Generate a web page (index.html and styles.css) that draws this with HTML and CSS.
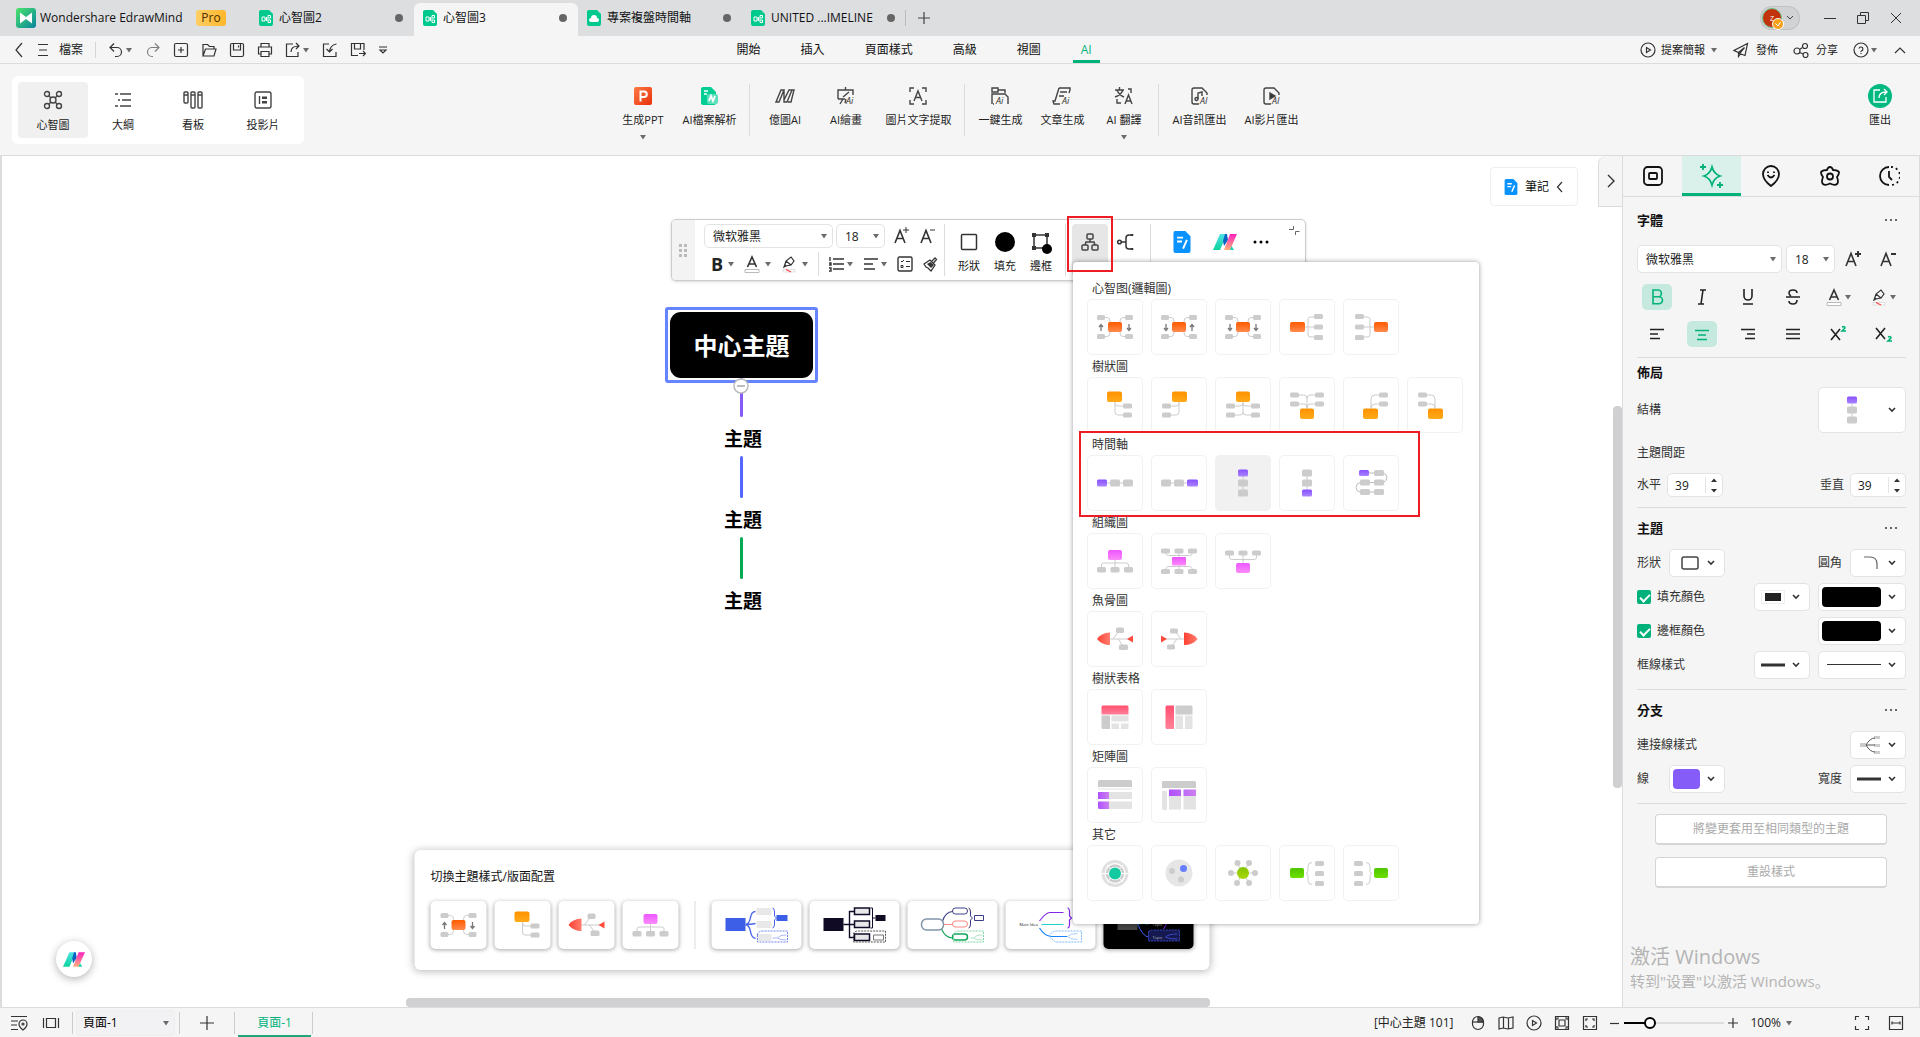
FILE: index.html
```html
<!DOCTYPE html>
<html lang="zh-Hant">
<head>
<meta charset="utf-8">
<title>Wondershare EdrawMind</title>
<link rel="stylesheet" href="styles.css">
</head>
<body>
<svg class="defs" aria-hidden="true">
  <defs>
    <linearGradient id="gLogo" x1="0" y1="0" x2="1" y2="1"><stop offset="0" stop-color="#4be36a"/><stop offset="1" stop-color="#07869e"/></linearGradient>
    <linearGradient id="gOrange" x1="0" y1="0" x2="0" y2="1"><stop offset="0" stop-color="#ff5a00"/><stop offset="1" stop-color="#ff8a4d"/></linearGradient>
    <linearGradient id="gAmber" x1="0" y1="0" x2="0" y2="1"><stop offset="0" stop-color="#ff9100"/><stop offset="1" stop-color="#ffab1a"/></linearGradient>
    <linearGradient id="gViolet" x1="0" y1="0" x2="0" y2="1"><stop offset="0" stop-color="#8850ff"/><stop offset="1" stop-color="#ab85ff"/></linearGradient>
    <linearGradient id="gPink" x1="0" y1="0" x2="0" y2="1"><stop offset="0" stop-color="#ec55ff"/><stop offset="1" stop-color="#fb8cf8"/></linearGradient>
    <linearGradient id="gRed" x1="0" y1="0" x2="1" y2="0"><stop offset="0" stop-color="#ff4133"/><stop offset="1" stop-color="#ff7d6e"/></linearGradient>
    <linearGradient id="gRose" x1="0" y1="0" x2="0" y2="1"><stop offset="0" stop-color="#ff5070"/><stop offset="1" stop-color="#ff8298"/></linearGradient>
    <linearGradient id="gPurple" x1="0" y1="0" x2="1" y2="0"><stop offset="0" stop-color="#b050ff"/><stop offset="1" stop-color="#cb80ef"/></linearGradient>
    <linearGradient id="gGreen" x1="0" y1="0" x2="0" y2="1"><stop offset="0" stop-color="#50c400"/><stop offset="1" stop-color="#6ee000"/></linearGradient>
    <linearGradient id="gLime" x1="0" y1="0" x2="0" y2="1"><stop offset="0" stop-color="#84c400"/><stop offset="1" stop-color="#a8d80c"/></linearGradient>
    <linearGradient id="gPpt" x1="0" y1="0" x2="1" y2="1"><stop offset="0" stop-color="#ff7a45"/><stop offset="1" stop-color="#e8300a"/></linearGradient>
    <linearGradient id="gTeal" x1="0" y1="0" x2="0" y2="1"><stop offset="0" stop-color="#4fe3e8"/><stop offset="1" stop-color="#0ad39b"/></linearGradient>
    <linearGradient id="gMag" x1="0" y1="0" x2="0" y2="1"><stop offset="0" stop-color="#ff1fc0"/><stop offset="1" stop-color="#ffb27a"/></linearGradient>

    <symbol id="tri" viewBox="0 0 8 6"><path d="M1 1h6L4 5.500z" fill="#6b6b6b"/></symbol>
    <symbol id="chev" viewBox="0 0 10 8"><path d="M2 2l3 3 3-3" fill="none" stroke="#333" stroke-width="1.600"/></symbol>
    <symbol id="dots" viewBox="0 0 14 4"><path d="M1 1h2v2H1zM6 1h2v2H6zM11 1h2v2h-2z" fill="#666"/></symbol>
    <symbol id="docMap" viewBox="0 0 16 18"><path d="M3 1h8l4 4v10a2 2 0 0 1-2 2H3a2 2 0 0 1-2-2V3a2 2 0 0 1 2-2z" fill="#00c98d"/><path d="M4 8h3v4H4zM10 6.500h2.500V9H10zM10 11h2.500v2.500H10zM7 10h3M8.500 8v4" fill="none" stroke="#fff"/></symbol>
    <symbol id="docCloud" viewBox="0 0 16 18"><path d="M3 1h8l4 4v10a2 2 0 0 1-2 2H3a2 2 0 0 1-2-2V3a2 2 0 0 1 2-2z" fill="#00c98d"/><path d="M5 13a2 2 0 0 1 0-4 3 3 0 0 1 6 0 2 2 0 0 1 0 4z" fill="#fff"/></symbol>
    <symbol id="note" viewBox="0 0 16 20"><path d="M2 0h9l5 5v13a2 2 0 0 1-2 2H2a2 2 0 0 1-2-2V2a2 2 0 0 1 2-2z" fill="#0a93ff"/><path d="M3.500 6H9M3.500 9.500H8M12.500 8l-3.500 8" stroke="#fff" stroke-width="1.800" fill="none"/></symbol>
    <symbol id="ailogo" viewBox="0 0 24 18"><path d="M7 1h7L7 17H0z" fill="url(#gTeal)"/><path d="M12 1h2l1 6-4 6-1-5z" fill="#0b62c4"/><path d="M18 12l3 5h-5z" fill="#12d6b4"/><path d="M17 1h7l-7 16h-6z" fill="url(#gMag)"/></symbol>
    <symbol id="fontA" viewBox="0 0 20 20"><path d="M3 17L8 4.500 13 17M5 12.500h6" fill="none" stroke="#333" stroke-width="1.600"/></symbol>
    <symbol id="colorA" viewBox="0 0 16 20"><path d="M3.500 13L8 3l4.500 10M5 10h6" fill="none" stroke="#333" stroke-width="1.600"/><path d="M1 15.500h14v3H1z" fill="#fff" stroke="#aaa" stroke-width=".8"/></symbol>
    <symbol id="marker" viewBox="0 0 16 20"><path d="M3 13l2-6 5-4 3 4-3 4-5 1zM5 7l5 4M3 13l2-2" fill="none" stroke="#333" stroke-width="1.200"/><path d="M2 15.500h12v2.500H2z" fill="#fff" stroke="#ccc" stroke-width=".6"/><path d="M5 15.500l5 2.500" stroke="#f44" stroke-width="1.200"/></symbol>

    <!-- layout thumbnails, drawn on a 56px square -->
    <g id="boxes4" fill="#ccc"><rect x="10" y="16" width="8" height="5" rx="1.500"/><rect x="38" y="16" width="8" height="5" rx="1.500"/><rect x="10" y="35" width="8" height="5" rx="1.500"/><rect x="38" y="35" width="8" height="5" rx="1.500"/><path d="M18 18.500h2q3 0 3 4v11q0 4-3 4h-2M38 18.500h-2q-3 0-3 4v11q0 4 3 4h2" fill="none" stroke="#ccc"/></g>
    <path id="up" d="M14 32v-6M12 28l2-2.500 2 2.500" fill="none" stroke="#777" stroke-width="1.300"/>
    <path id="down" d="M14 25v6M12 29l2 2.500 2-2.500" fill="none" stroke="#777" stroke-width="1.300"/>
    <g id="mindA"><use href="#boxes4"/><rect x="21" y="23" width="14" height="10" rx="2" fill="url(#gOrange)"/><use href="#up"/><use href="#down" x="28"/></g>
    <g id="mindB"><use href="#boxes4"/><rect x="21" y="23" width="14" height="10" rx="2" fill="url(#gOrange)"/><use href="#down" x="1"/><use href="#up" x="27"/></g>
    <g id="mindC"><use href="#boxes4"/><rect x="21" y="23" width="14" height="10" rx="2" fill="url(#gOrange)"/><use href="#down" x="1"/><use href="#down" x="27"/></g>
    <g id="mindR"><path d="M25 28h11M37 18h-5q-3 0-3 2v16q0 2 3 2h5" fill="none" stroke="#ccc"/><g fill="#ccc"><rect x="35" y="15" width="9" height="5" rx="1.500"/><rect x="35" y="25.500" width="9" height="5" rx="1.500"/><rect x="35" y="36" width="9" height="5" rx="1.500"/></g><rect x="11" y="23" width="15" height="10" rx="2" fill="url(#gOrange)"/></g>
    <g id="mindL"><path d="M20 28h12M20 18h4q3 0 3 2v16q0 2-3 2h-4" fill="none" stroke="#ccc"/><g fill="#ccc"><rect x="12" y="15" width="9" height="5" rx="1.500"/><rect x="12" y="25.500" width="9" height="5" rx="1.500"/><rect x="12" y="36" width="9" height="5" rx="1.500"/></g><rect x="31" y="23" width="14" height="10" rx="2" fill="url(#gOrange)"/></g>
    <g id="treeR"><path d="M28 24v11q0 3 3 3h6M28 26q0 3 3 3h6" fill="none" stroke="#ccc"/><g fill="#ccc"><rect x="36" y="26.500" width="9" height="5" rx="1.500"/><rect x="36" y="35.500" width="9" height="5" rx="1.500"/></g><rect x="20" y="14.500" width="15" height="10.500" rx="2" fill="url(#gAmber)"/></g>
    <g id="treeL"><path d="M28 24v11q0 3-3 3h-6M28 26q0 3-3 3h-6" fill="none" stroke="#ccc"/><g fill="#ccc"><rect x="11" y="26.500" width="9" height="5" rx="1.500"/><rect x="11" y="35.500" width="9" height="5" rx="1.500"/></g><rect x="21" y="14.500" width="15" height="10.500" rx="2" fill="url(#gAmber)"/></g>
    <g id="treeB"><path d="M28 24v11q0 3 3 3h6M28 26q0 3 3 3h6M28 35q0 3-3 3h-6M28 26q0 3-3 3h-6" fill="none" stroke="#ccc"/><g fill="#ccc"><rect x="11" y="26.500" width="9" height="5" rx="1.500"/><rect x="11" y="35.500" width="9" height="5" rx="1.500"/><rect x="36" y="26.500" width="9" height="5" rx="1.500"/><rect x="36" y="35.500" width="9" height="5" rx="1.500"/></g><rect x="21" y="14.500" width="14" height="10.500" rx="2" fill="url(#gAmber)"/></g>
    <g id="treeUp"><path d="M28 32V22q0-4-3-4h-5M28 31q0-4-3-4h-5M28 22q0-4 3-4h5M28 31q0-4 3-4h5" fill="none" stroke="#ccc"/><g fill="#ccc"><rect x="11" y="15.500" width="9" height="5" rx="1.500"/><rect x="11" y="24.500" width="9" height="5" rx="1.500"/><rect x="36" y="15.500" width="9" height="5" rx="1.500"/><rect x="36" y="24.500" width="9" height="5" rx="1.500"/></g><rect x="21" y="31.500" width="14" height="10.500" rx="2" fill="url(#gAmber)"/></g>
    <g id="treeUpR"><path d="M28 32V22q0-4 4-4h5M28 31q0-4 4-4h5" fill="none" stroke="#ccc"/><g fill="#ccc"><rect x="36" y="15.500" width="9" height="5" rx="1.500"/><rect x="36" y="24.500" width="9" height="5" rx="1.500"/></g><rect x="20" y="31.500" width="15" height="10.500" rx="2" fill="url(#gAmber)"/></g>
    <g id="treeUpL"><path d="M28 32V22q0-4-4-4h-5M28 31q0-4-4-4h-5" fill="none" stroke="#ccc"/><g fill="#ccc"><rect x="11" y="15.500" width="9" height="5" rx="1.500"/><rect x="11" y="24.500" width="9" height="5" rx="1.500"/></g><rect x="21" y="31.500" width="15" height="10.500" rx="2" fill="url(#gAmber)"/></g>
    <g id="timeR"><path d="M15 28h28" stroke="#ccc"/><rect x="10" y="24.500" width="10" height="7" rx="1.500" fill="url(#gViolet)"/><rect x="23" y="24.500" width="10" height="7" rx="1.500" fill="#ccc"/><rect x="36" y="24.500" width="10" height="7" rx="1.500" fill="#ccc"/></g>
    <g id="timeL"><path d="M15 28h28" stroke="#ccc"/><rect x="10" y="24.500" width="10" height="7" rx="1.500" fill="#ccc"/><rect x="23" y="24.500" width="10" height="7" rx="1.500" fill="#ccc"/><rect x="36" y="24.500" width="11" height="7" rx="1.500" fill="url(#gViolet)"/></g>
    <g id="timeD"><path d="M28 18v20" stroke="#ccc"/><rect x="23" y="14.500" width="10" height="7" rx="1.500" fill="url(#gViolet)"/><rect x="23" y="24.500" width="10" height="7" rx="1.500" fill="#ccc"/><rect x="23" y="34.500" width="10" height="7" rx="1.500" fill="#ccc"/></g>
    <g id="timeU"><path d="M28 18v20" stroke="#ccc"/><rect x="23" y="14.500" width="10" height="7" rx="1.500" fill="#ccc"/><rect x="23" y="24.500" width="10" height="7" rx="1.500" fill="#ccc"/><rect x="23" y="34.500" width="10" height="7" rx="1.500" fill="url(#gViolet)"/></g>
    <g id="timeS"><path d="M20 18h20q4 1 4 4.500T40 27.500H17q-4 1-4 5t4 4.500h20" fill="none" stroke="#bbb"/><g fill="#ccc"><rect x="31" y="15" width="10" height="6" rx="1.500"/><rect x="17" y="24.500" width="10" height="6" rx="1.500"/><rect x="31" y="24.500" width="10" height="6" rx="1.500"/><rect x="17" y="34" width="10" height="6" rx="1.500"/><rect x="31" y="34" width="10" height="6" rx="1.500"/></g><rect x="16" y="15" width="10" height="6" rx="1.500" fill="url(#gViolet)"/></g>
    <g id="orgD"><path d="M28 26v10M14.500 35v-3q0-2 2-2h23q2 0 2 2v3" fill="none" stroke="#ccc"/><g fill="#ccc"><rect x="10" y="34" width="9" height="5.500" rx="1.500"/><rect x="23.500" y="34" width="9" height="5.500" rx="1.500"/><rect x="37" y="34" width="9" height="5.500" rx="1.500"/></g><rect x="21" y="17" width="14" height="10" rx="2" fill="url(#gPink)"/></g>
    <g id="orgB"><path d="M28 18v20M14.500 19q0 3.500 3 3.500h21q3 0 3-3.500M14.500 38q0-4.500 3-4.500h21q3 0 3 4.500" fill="none" stroke="#ccc"/><g fill="#ccc"><rect x="10" y="15.500" width="9" height="5" rx="1.500"/><rect x="23.500" y="15.500" width="9" height="5" rx="1.500"/><rect x="37" y="15.500" width="9" height="5" rx="1.500"/><rect x="10" y="36" width="9" height="5" rx="1.500"/><rect x="23.500" y="36" width="9" height="5" rx="1.500"/><rect x="37" y="36" width="9" height="5" rx="1.500"/></g><rect x="21" y="24" width="14" height="8.500" rx="1" fill="url(#gPink)"/></g>
    <g id="orgU"><path d="M28 20v11M14.500 21v3q0 2.500 2 2.500h23q2 0 2-2.500v-3" fill="none" stroke="#ccc"/><g fill="#ccc"><rect x="10" y="17.500" width="9" height="5" rx="1.500"/><rect x="23.500" y="17.500" width="9" height="5" rx="1.500"/><rect x="37" y="17.500" width="9" height="5" rx="1.500"/></g><rect x="21" y="30" width="14" height="10" rx="2" fill="url(#gPink)"/></g>
    <g id="fishL"><path d="M22 28h20M26 28l6-8M31 28l5 7" stroke="#ccc" fill="none"/><path d="M23 21.500v12.500Q15 34 10 28q4-6 13-6.500z" fill="url(#gRed)"/><path d="M46 24.500v7L40 28z" fill="#ff4b3c"/><rect x="29" y="16.500" width="8" height="5.500" rx="1.500" fill="#ccc"/><rect x="32" y="33.500" width="9" height="5.500" rx="1.500" fill="#ccc"/></g>
    <g id="fishR"><path d="M14 28h20M24 20l6 8M20 36l6-8" stroke="#ccc" fill="none"/><path d="M33 21.500v12.500Q42 34 46.500 28q-4-6-13.500-6.500z" fill="url(#gRed)"/><path d="M10 24.500v7l6-3.500z" fill="#ff4b3c"/><rect x="19" y="17.500" width="8" height="5" rx="1.500" fill="#ccc"/><rect x="16" y="33.500" width="8" height="5" rx="1.500" fill="#ccc"/></g>
    <g id="tabA"><path d="M14.500 18q0-1.500 1.500-1.500h24q1.500 0 1.500 1.500v7.500h-27z" fill="url(#gRose)"/><path d="M14.500 26.500H23V40h-7q-1.500 0-1.500-1.500z" fill="#ccc"/><path d="M24.500 26.500h17v6h-17zM24.500 34.500h7.500V40h-7.500zM34 34.500h7.500V40H34z" fill="#e3e3e3"/></g>
    <g id="tabB"><path d="M23 16.500V40h-7q-1.500 0-1.500-1.500V18q0-1.500 1.500-1.500z" fill="url(#gRose)"/><path d="M24.500 16.500H40q1.500 0 1.500 1.500v7.500h-17z" fill="#ccc"/><path d="M24.500 26.500H32V40h-7.500zM34 26.500h7.500V40H34z" fill="#e3e3e3"/></g>
    <g id="matA"><path d="M11 21.500h34v1H11zM22 25h23v7H22zM22 34.500h23v6q0 1.500-1.500 1.500H22z" fill="#e3e3e3"/><path d="M11 14.500q0-1.500 1.500-1.500h31q1.500 0 1.500 1.500V20H11z" fill="#ccc"/><path d="M11 25h11v7H11zM11 34.500h11V42h-9.500q-1.500 0-1.500-1.500z" fill="url(#gPurple)"/></g>
    <g id="matB"><path d="M11 24h5v19h-3.500Q11 43 11 41zM18 29h12v13.500H18zM32.500 29H45v13.500H32.500z" fill="#e3e3e3"/><path d="M11 15.500q0-1.500 1.500-1.500h31q1.500 0 1.500 1.500V21H11z" fill="#ccc"/><path d="M18 22.500h12V29H18zM32.500 22.500H45V29H32.500z" fill="url(#gPurple)"/></g>
    <g id="othA"><circle cx="28" cy="28.500" r="12" fill="none" stroke="#e0e0e0" stroke-width="3"/><circle cx="28" cy="28.500" r="8" fill="none" stroke="#ccc" stroke-width="2.500"/><path d="M14 28.500h28M20 20l16 17M36 20L20 37" stroke="#fff"/><circle cx="28" cy="28.500" r="6" fill="#12c9a2"/></g>
    <g id="othB"><circle cx="28" cy="28" r="13.500" fill="#e6e6e6"/><circle cx="21" cy="26" r="3" fill="#ccc"/><circle cx="30" cy="34.500" r="3" fill="#ccc"/><circle cx="32.500" cy="23.500" r="3.500" fill="#667eff"/></g>
    <g id="othC"><path d="M17 28h22M22 18l12 20M34 18L22 38" stroke="#ccc"/><g fill="#ccc"><circle cx="16" cy="28" r="3"/><circle cx="40" cy="28" r="3"/><circle cx="22.500" cy="18" r="3"/><circle cx="34" cy="18" r="3"/><circle cx="22" cy="38" r="3"/><circle cx="34" cy="38" r="3"/></g><circle cx="28" cy="28" r="6" fill="url(#gLime)"/></g>
    <g id="othD"><rect x="11" y="23" width="14" height="10" rx="2" fill="url(#gGreen)"/><path d="M33 17.500q-4 0-4 4v4q0 3-2 3 2 0 2 3v4q0 4 4 4" fill="none" stroke="#ccc"/><g fill="#ccc"><rect x="36" y="16" width="9" height="5" rx="1.500"/><rect x="36" y="26" width="9" height="5" rx="1.500"/><rect x="36" y="36" width="9" height="5" rx="1.500"/></g></g>
    <g id="othE"><rect x="31" y="23" width="14" height="10" rx="2" fill="url(#gGreen)"/><path d="M23 17.500q4 0 4 4v4q0 3 2 3-2 0-2 3v4q0 4-4 4" fill="none" stroke="#ccc"/><g fill="#ccc"><rect x="11" y="16" width="9" height="5" rx="1.500"/><rect x="11" y="26" width="9" height="5" rx="1.500"/><rect x="11" y="36" width="9" height="5" rx="1.500"/></g></g>
  </defs>
</svg>

<header class="titlebar">
  <div class="brand">
    <svg width="20" height="20" viewBox="0 0 20 20"><rect width="20" height="20" rx="3" fill="url(#gLogo)"/><path d="M4 15.500v-11l6 4.500 6-4.500v11L10 11z" fill="#fff"/></svg>
    <span class="brand-name">Wondershare EdrawMind</span>
    <span class="pro">Pro</span>
  </div>
  <div class="doc-tabs">
    <button class="doc-tab"><svg width="16" height="18"><use href="#docMap"/></svg><span>心智圖2</span><i></i></button>
    <button class="doc-tab current"><svg width="16" height="18"><use href="#docMap"/></svg><span>心智圖3</span><i></i></button>
    <button class="doc-tab"><svg width="16" height="18"><use href="#docCloud"/></svg><span>專案複盤時間軸</span><i></i></button>
    <button class="doc-tab last"><svg width="16" height="18"><use href="#docMap"/></svg><span>UNITED ...IMELINE</span><i></i></button>
    <button class="new-tab" aria-label="新增"><svg width="16" height="16" viewBox="0 0 16 16"><path d="M8 2v12M2 8h12" stroke="#444" stroke-width="1.200"/></svg></button>
  </div>
  <div class="window-tools">
    <button class="account" aria-label="帳戶"><svg width="40" height="24" viewBox="0 0 40 24"><circle cx="12" cy="12" r="9.500" fill="#c2330d" stroke="#6cc58f"/><text x="12" y="15" class="avatar-letter">Z</text><circle cx="18" cy="18" r="5.500" fill="#f6a01b" stroke="#fff"/><path d="M15.500 17.500l2.500 2.500 2.500-4" stroke="#fff" fill="none"/><path d="M27 10l3 3 3-3" stroke="#444" fill="none"/></svg></button>
    <button aria-label="最小化"><svg width="12" height="12" viewBox="0 0 12 12"><path d="M0 6.500h12" stroke="#333"/></svg></button>
    <button aria-label="還原"><svg width="14" height="14" viewBox="0 0 14 14"><path d="M1.500 4.500h8v8h-8zM4.500 4.500v-3h8v8h-3" fill="none" stroke="#333"/></svg></button>
    <button aria-label="關閉"><svg width="12" height="12" viewBox="0 0 12 12"><path d="M1 1l10 10M11 1L1 11" stroke="#333"/></svg></button>
  </div>
</header>

<div class="menubar">
  <div class="quick">
    <button aria-label="返回"><svg width="16" height="16" viewBox="0 0 16 16"><path d="M11 1L5 8l6 7"/></svg></button>
    <button class="with-text"><svg width="16" height="16" viewBox="0 0 16 16"><path d="M3 2.500h10M4 8h8M3 13.500h10"/></svg><span>檔案</span></button>
    <span class="bar-rule"></span>
    <button class="with-tri" aria-label="復原"><svg width="16" height="16" viewBox="0 0 16 16"><path d="M6 1.500L2 5.500l4 4M2.500 5.500H9a4.500 4.500 0 0 1 0 9H7"/></svg><svg width="8" height="6"><use href="#tri"/></svg></button>
    <button class="faded" aria-label="重做"><svg width="16" height="16" viewBox="0 0 16 16"><path d="M10 1.500l4 4-4 4M13.500 5.500H7a4.500 4.500 0 0 0 0 9h1"/></svg></button>
    <button aria-label="新增"><svg width="16" height="16" viewBox="0 0 16 16"><rect x="1.500" y="1.500" width="13" height="13" rx="1.500"/><path d="M8 5v6M5 8h6"/></svg></button>
    <button aria-label="開啟"><svg width="16" height="16" viewBox="0 0 16 16"><path d="M2 14V2.500h4.500l2 2H13V7M2 14l2.500-7H15l-2 7z"/></svg></button>
    <button aria-label="儲存"><svg width="16" height="16" viewBox="0 0 16 16"><rect x="1.500" y="1.500" width="13" height="13" rx="1.500"/><path d="M4.500 2v6h7V2M9.500 3.500v2"/></svg></button>
    <button aria-label="列印"><svg width="16" height="16" viewBox="0 0 16 16"><path d="M4 5V1.500h8V5M4 12H1.500V5h13v7H12M4 9.500h8v5H4z"/></svg></button>
    <button class="with-tri" aria-label="匯出"><svg width="16" height="16" viewBox="0 0 16 16"><path d="M8 2H1.500v12.500H13V10M6 10q0-6 8-6M11 1l3 3-3 3"/></svg><svg width="8" height="6"><use href="#tri"/></svg></button>
    <button aria-label="匯入"><svg width="16" height="16" viewBox="0 0 16 16"><path d="M7 2H1.500v12.500H14V10M14.500 2Q8 3 7.500 10M4.500 7l3 3 3-3"/></svg></button>
    <button aria-label="另存"><svg width="16" height="16" viewBox="0 0 16 16"><path d="M14 8V1.500H1.500v12H8M4.500 2v5h6V2M9 11.500h6M13 9l2.500 2.500L13 14"/></svg></button>
    <button aria-label="更多"><svg width="10" height="10" viewBox="0 0 10 10"><path d="M1 2h8M2 5l3 3 3-3z"/></svg></button>
  </div>
  <nav class="menu">
    <a href="#">開始</a><a href="#">插入</a><a href="#">頁面樣式</a><a href="#">高級</a><a href="#">視圖</a><a href="#" class="current">AI</a>
  </nav>
  <div class="share-tools">
    <button><svg width="16" height="16" viewBox="0 0 16 16"><circle cx="8" cy="8" r="7"/><path d="M6.500 5.500v5L10.500 8z"/></svg><span>提案簡報</span><svg width="8" height="6"><use href="#tri"/></svg></button>
    <button><svg width="16" height="16" viewBox="0 0 16 16"><path d="M14.500 1.500L1 8.500l4.500 2 6-5-5 6 5.500 2zM5.500 10.500v4l2-2.500"/></svg><span>發佈</span></button>
    <button><svg width="16" height="16" viewBox="0 0 16 16"><circle cx="4" cy="9" r="3"/><circle cx="12" cy="4" r="2.500"/><circle cx="12.500" cy="13" r="2.500"/><path d="M6.500 7.500l3-2M6.500 10.500l4 1.500"/></svg><span>分享</span></button>
    <button class="with-tri" aria-label="說明"><svg width="16" height="16" viewBox="0 0 16 16"><circle cx="8" cy="8" r="7"/><path d="M6 6.500a2 2 0 1 1 2 2.500M8 9v1M8 11v1"/></svg><svg width="8" height="6"><use href="#tri"/></svg></button>
    <button aria-label="收合"><svg width="14" height="10" viewBox="0 0 14 10"><path d="M2 8l5-5 5 5"/></svg></button>
  </div>
</div>

<div class="ribbon">
  <div class="ribbon-side">
    <div class="views">
      <button class="current"><svg width="20" height="20" viewBox="0 0 20 20"><circle cx="10" cy="10" r="3"/><circle cx="4" cy="4" r="2.500"/><circle cx="16" cy="4" r="2.500"/><circle cx="4" cy="16" r="2.500"/><circle cx="16" cy="16" r="2.500"/><path d="M6 6l2 2M14 6l-2 2M6 14l2-2M14 14l-2-2"/></svg>心智圖</button>
      <button><svg width="20" height="20" viewBox="0 0 20 20"><path d="M2 4h3M7 4h11M5 10h2M9 10h9M2 16h3M7 16h11"/></svg>大綱</button>
      <button><svg width="20" height="20" viewBox="0 0 20 20"><rect x="1" y="2" width="4" height="11" rx="1"/><rect x="8" y="2" width="4" height="16" rx="1"/><rect x="15" y="2" width="4" height="16" rx="1"/><path d="M1 5h4M8 5h4M15 5h4"/></svg>看板</button>
      <button><svg width="20" height="20" viewBox="0 0 20 20"><rect x="2" y="2" width="16" height="16" rx="2"/><path d="M6.500 6v8"/><path d="M9 6.500h5v2.500H9zM9 11h5v2.500H9z" fill="#444" stroke="none"/></svg>投影片</button>
    </div>
  </div>
  <div class="ai-tools">
    <button><svg width="20" height="20" viewBox="0 0 20 20"><rect x="1" y="1" width="18" height="18" rx="2" fill="url(#gPpt)" stroke="none"/><path d="M7.500 15.500v-10H11a2.800 2.800 0 0 1 0 5.600H8" stroke="#fff" stroke-width="2"/></svg>生成PPT<svg class="more" width="8" height="6"><use href="#tri"/></svg></button>
    <button><svg width="20" height="20" viewBox="0 0 20 20"><path d="M4 1h8l5 5v11a2 2 0 0 1-2 2H4a2 2 0 0 1-2-2V3a2 2 0 0 1 2-2z" fill="#02cd93" stroke="none"/><path d="M5 5h4M5 8h3" stroke="#fff"/><rect x="8" y="8" width="11" height="10" rx="2" fill="#5ee0bd" stroke="none"/><path d="M10 15l2-5 2 5 2-5" stroke="#fff" stroke-width="1.800"/></svg>AI檔案解析</button>
    <span class="tool-rule"></span>
    <button><svg width="20" height="20" viewBox="0 0 20 20"><path d="M1 16L6 4h3L4 16zM9 4l0 12h3L17 4h-3L9 14M17 4h2l-3 12h-3"/></svg>億圖AI</button>
    <button><svg width="20" height="20" viewBox="0 0 20 20"><path d="M2 13V4h15v5M2 13h7M9.500 1v3M13 6l-6 5M4 18l3-5M10 13l-1 4"/><text x="10" y="18" class="ai-mark">Ai</text></svg>AI繪畫</button>
    <button><svg width="20" height="20" viewBox="0 0 20 20"><path d="M2 6V2h4M14 2h4v4M18 14v4h-4M6 18H2v-4M6 15l4-10 4 10M7.500 11.500h5"/></svg>圖片文字提取</button>
    <span class="tool-rule"></span>
    <button><svg width="20" height="20" viewBox="0 0 20 20"><path d="M2 2h6v4H2zM8 4h7v3M2 18V8h13l3 3v7M3 18h1"/><text x="6" y="18" class="ai-mark">Ai</text></svg>一鍵生成</button>
    <button><svg width="20" height="20" viewBox="0 0 20 20"><path d="M7 2h11v2l-1 3M7 2L3 15H1l1 3h6M8 6h7M7 10h5"/><text x="10" y="18" class="ai-mark">Ai</text></svg>文章生成</button>
    <button><svg width="20" height="20" viewBox="0 0 20 20"><path d="M1 4h9M5.500 1v3M9 4Q7 9 1 11M3 4q2 5 7 7M14 3h3v4M3 13v4h4M11 18l3.500-9L18 18M12.500 15h4"/></svg>AI 翻譯<svg class="more" width="8" height="6"><use href="#tri"/></svg></button>
    <span class="tool-rule"></span>
    <button><svg width="20" height="20" viewBox="0 0 20 20"><path d="M9 18H4a2 2 0 0 1-2-2V4a2 2 0 0 1 2-2h8l5 5v2M8 13V7l4-1v4"/><circle cx="6.500" cy="13" r="1.500"/><text x="10" y="18" class="ai-mark">AI</text></svg>AI音訊匯出</button>
    <button><svg width="20" height="20" viewBox="0 0 20 20"><path d="M9 18H4a2 2 0 0 1-2-2V4a2 2 0 0 1 2-2h8l5 5v2"/><path d="M8 7v6l5-3z" fill="#333"/><text x="10" y="18" class="ai-mark">AI</text></svg>AI影片匯出</button>
  </div>
  <div class="ribbon-side end">
    <button class="export"><svg width="24" height="24" viewBox="0 0 24 24"><circle cx="12" cy="12" r="12" fill="#00b981"/><path d="M12 6H6v12h12v-5M11 14q0-6 7-6M16 5l3 3-3 3" fill="none" stroke="#fff" stroke-width="1.300"/></svg>匯出</button>
  </div>
</div>

<main class="work">
  <section class="canvas" aria-label="畫布">
    <div class="topic root"><span>中心主題</span></div>
    <span class="link l1"></span><span class="link l2"></span><span class="link l3"></span>
    <button class="fold" aria-label="收合"><svg width="16" height="16" viewBox="0 0 16 16"><circle cx="8" cy="8" r="7" fill="#fff" stroke="#bbb" stroke-width="1.500"/><path d="M4 8h8" stroke="#aaa" stroke-width="1.500"/></svg></button>
    <div class="topic t1">主題</div><div class="topic t2">主題</div><div class="topic t3">主題</div>

    <button class="notes"><svg width="14" height="16"><use href="#note"/></svg>筆記<svg width="8" height="12" viewBox="0 0 8 12"><path d="M6 1L1.500 6 6 11" fill="none" stroke="#333" stroke-width="1.200"/></svg></button>
    <button class="collapse" aria-label="收合面板"><svg width="10" height="16" viewBox="0 0 10 16"><path d="M2 2l6 6-6 6" fill="none" stroke="#333" stroke-width="1.400"/></svg></button>
    <span class="scroll-v"></span><span class="scroll-h"></span>
    <button class="assistant" aria-label="AI 助手"><svg width="22" height="17"><use href="#ailogo"/></svg></button>

    <div class="switcher">
      <h2>切換主題樣式/版面配置</h2>
      <div class="switch-row">
        <button class="pick" aria-label="心智圖"><svg viewBox="0 4 56 48"><use href="#mindA"/></svg></button>
        <button class="pick" aria-label="樹狀圖"><svg viewBox="0 4 56 48"><use href="#treeR"/></svg></button>
        <button class="pick" aria-label="魚骨圖"><svg viewBox="0 4 56 48"><use href="#fishL"/></svg></button>
        <button class="pick" aria-label="組織圖"><svg viewBox="0 4 56 48"><use href="#orgD"/></svg></button>
        <span class="pick-rule"></span>
        <button class="pick style" aria-label="樣式 1"><svg viewBox="0 0 90 48" fill="none"><path d="M34 23.500q4-1 5-7t5-6M34 23.500q6 0 10-1M34 23.500q4 1 5 7t5 7" stroke="#4763e8" stroke-width="1.400"/><path d="M45 7h15v7H45zM45 20h15v7H45zM45 33h15v7H45z" fill="#e8e8e8"/><path d="M14 17h20v13H14z" fill="#3d5fe8"/><path d="M65 14h11v6H65z" fill="#3d5fe8"/><path d="M61 7q2 0 2 4v4l2 2-2 2v4q0 4-2 4" stroke="#4763e8"/><path d="M46 34q0-4 6-4h24v11H46z" stroke="#6f86ee" stroke-dasharray="2 1"/><path d="M61 37h5q2-3 9-3M66 37q2 2 9 2" stroke="#a9b6f4"/></svg></button>
        <button class="pick style" aria-label="樣式 2"><svg viewBox="0 0 90 48" fill="none"><path d="M34 23.500h11M45 10.500h-5v26h5" stroke="#120b28" stroke-width="1.400"/><path d="M45 7h15v6.500H45zM45 20h15v6.500H45zM45 33h15v6.500H45z" fill="#e8e8e8" stroke="#120b28" stroke-width="1.500"/><path d="M14 17h20v13H14z" fill="#100a25"/><path d="M66 14h10v6H66z" fill="#100a25"/><path d="M61 7h2v20h-2M63 17h3" stroke="#120b28"/><path d="M44 33q0-3 6-3h26v11H44z" stroke="#555" stroke-dasharray="2 1"/><path d="M64 34h10v5H64z" stroke="#777"/></svg></button>
        <button class="pick style" aria-label="樣式 3"><svg viewBox="0 0 90 48" fill="none"><path d="M35 20q3-9 10-9.500" stroke="#3b3e85" stroke-width="1.200"/><path d="M36 23.500h9" stroke="#ff8585" stroke-width="1.200"/><path d="M34 28q4 9 11 9" stroke="#10a75a" stroke-width="1.200"/><rect x="14" y="18" width="22" height="11" rx="5" stroke="#8095a8" stroke-width="1.500"/><rect x="45" y="7" width="15" height="6" rx="3" stroke="#3b3e85"/><rect x="45" y="20" width="15" height="6" rx="3" stroke="#ff8585"/><rect x="45" y="33" width="15" height="6" rx="3" stroke="#10a75a" stroke-width="1.500"/><path d="M61 7q2 0 2 4v4l2 2-2 2v4q0 4-2 4M67 14.500h9v5h-9z" stroke="#3b3e85"/><path d="M46 34q0-4 6-4h24v11H46z" stroke="#7ed3a4" stroke-dasharray="2 1"/><path d="M63 37h3q2-3 9-3M66 37q2 2 9 2" stroke="#aee3c5"/></svg></button>
        <button class="pick style" aria-label="樣式 4"><svg viewBox="0 0 90 48" fill="none"><text x="14" y="25" class="mini-dark">Main Idea</text><path d="M34 20q6-8 10-8.500h14M62 7q2 0 2 4v4l2 2-2 2v4q0 4-2 4" stroke="#8128e8" stroke-width="1.200"/><path d="M36 23.500h22" stroke="#22d2c6" stroke-width="1.200"/><path d="M34 27q5 8 12 8.500h16" stroke="#1683ff" stroke-width="1.200"/><path d="M44 36q1-6 8-6h24v11H50z" stroke="#7bb9ff" stroke-dasharray="2 1"/><path d="M62 35.500q3-3 10-3M62 35.500q3 3 10 3" stroke="#a9d0ff"/></svg></button>
        <button class="pick style dark" aria-label="樣式 5"><svg viewBox="0 0 90 48" fill="none"><path d="M14 16h20v13H14z" fill="#444"/><path d="M34 23q6-1 11 0" stroke="#18b35b"/><path d="M34 23q6 13 11 13" stroke="#4060ff"/><path d="M60 28q3-3 3-8" stroke="#8128e8"/><path d="M45 31q0-2 6-2h25v11H45z" fill="#15194f" stroke="#3a48c8" stroke-dasharray="2 1"/><text x="49" y="25" class="mini-light">Topic</text><text x="49" y="38" class="mini-light">Topic</text><path d="M62 36q3-3 12-3M62 36q3 2 12 2" stroke="#3a48c8"/></svg></button>
      </div>
    </div>

    <div class="floatbar">
      <svg class="grip" width="23" height="60" viewBox="0 0 23 60" fill="#bbb"><path d="M7 24h3v3H7zM12 24h3v3h-3zM7 29h3v3H7zM12 29h3v3h-3zM7 34h3v3H7zM12 34h3v3h-3z"/></svg>
      <div class="font-tools">
        <div class="font-line">
          <span class="pick-box wide"><select aria-label="字型" lang="zh-Hans"><option>微软雅黑</option></select><svg width="8" height="6"><use href="#tri"/></svg></span>
          <span class="pick-box narrow"><select aria-label="字級"><option>18</option></select><svg width="8" height="6"><use href="#tri"/></svg></span>
          <button class="grow" aria-label="放大字型"><svg width="20" height="20"><use href="#fontA"/><path d="M11 4h6M14 1v6" stroke="#333"/></svg></button>
          <button class="shrink" aria-label="縮小字型"><svg width="20" height="20"><use href="#fontA"/><path d="M12 4h5" stroke="#333"/></svg></button>
        </div>
        <div class="font-line second">
          <button aria-label="粗體"><b class="bold-b">B</b><svg width="8" height="6"><use href="#tri"/></svg></button>
          <button aria-label="文字顏色"><svg width="16" height="20"><use href="#colorA"/></svg><svg width="8" height="6"><use href="#tri"/></svg></button>
          <button aria-label="醒目提示"><svg width="16" height="20"><use href="#marker"/></svg><svg width="8" height="6"><use href="#tri"/></svg></button>
          <span class="line-rule"></span>
          <button class="tight" aria-label="編號"><svg width="17" height="16" viewBox="0 0 17 16"><path d="M5 3h11M5 8h11M5 13h11M2 1v4M1 7h2v2H1M1 12h2v3H1" stroke="#333" stroke-width="1.400" fill="none"/></svg><svg width="8" height="6"><use href="#tri"/></svg></button>
          <button class="tight" aria-label="對齊"><svg width="16" height="16" viewBox="0 0 16 16"><path d="M1 3h14M1 8h9M1 13h11" stroke="#333" stroke-width="1.400"/></svg><svg width="8" height="6"><use href="#tri"/></svg></button>
          <button aria-label="清單"><svg width="16" height="16" viewBox="0 0 16 16"><rect x="1" y="1" width="14" height="14" rx="1.500" fill="none" stroke="#333" stroke-width="1.400"/><path d="M4 5l1 1 2-2M9 5.500h4M9 10.500h4M4 9.500h2v2H4z" stroke="#333" fill="none"/></svg></button>
          <button aria-label="格式刷"><svg width="16" height="16" viewBox="0 0 16 16"><path d="M10 5l3-3 1.500 1.500L11.500 7M2 8l6-4 5 5-4 6-3-3-2-1z" stroke="#333" fill="none" stroke-width="1.300"/><path d="M5 8l4 4 3-3-3.500-3z" fill="#333"/></svg></button>
        </div>
      </div>
      <span class="col-rule"></span>
      <button class="col"><svg width="24" height="24" viewBox="0 0 24 24"><rect x="4.500" y="4.500" width="15" height="15" rx="1" fill="none" stroke="#333" stroke-width="1.500"/></svg>形狀</button>
      <button class="col"><svg width="24" height="24" viewBox="0 0 24 24"><circle cx="12" cy="12" r="10"/></svg>填充</button>
      <button class="col"><svg width="24" height="24" viewBox="0 0 24 24"><path d="M5 5h13v13H5z" fill="none" stroke="#333" stroke-width="1.500"/><path d="M3 3h4v4H3zM16 3h4v4h-4zM3 16h4v4H3z" fill="#333"/><circle cx="18" cy="19" r="5"/></svg>邊框</button>
      <span class="col-rule"></span>
      <button class="col low current"><svg width="24" height="24" viewBox="0 0 24 24" fill="none" stroke="#444" stroke-width="1.500"><rect x="9" y="4" width="6" height="5" rx="1"/><rect x="4" y="15" width="6" height="5" rx="1"/><rect x="14" y="15" width="6" height="5" rx="1"/><path d="M12 9v3M7 15l1-3h8l1 3"/></svg>佈局</button>
      <button class="col low"><svg width="24" height="24" viewBox="0 0 24 24" fill="none" stroke="#333" stroke-width="1.500"><circle cx="5.500" cy="12" r="1.800"/><path d="M7 12h5M18 5h-3q-3 0-3 3v8q0 3 3 3h3"/><path d="M18 4v2M18 18v2" stroke-width="2.500"/></svg>分支</button>
      <span class="col-rule"></span>
      <button class="col low gap"><svg width="20" height="24" viewBox="0 -1 16 22"><use href="#note" width="16" height="20"/></svg>筆記</button>
      <button class="col low gap"><svg width="24" height="24"><use href="#ailogo"/></svg>AI</button>
      <button class="col" aria-label="更多"><svg width="24" height="24" viewBox="0 0 24 24"><circle cx="6" cy="12" r="1.500"/><circle cx="12" cy="12" r="1.500"/><circle cx="18" cy="12" r="1.500"/></svg></button>
      <svg class="pin" width="11" height="11" viewBox="0 0 11 11" fill="none" stroke="#666"><path d="M0 4.500h4.500V1M10.500 6.500h-4V10"/></svg>
    </div>

    <div class="layouts">
      <h3>心智图(邏輯圖)</h3>
      <div class="tiles"><button aria-label="心智圖 1"><svg><use href="#mindA"/></svg></button><button aria-label="心智圖 2"><svg><use href="#mindB"/></svg></button><button aria-label="心智圖 3"><svg><use href="#mindC"/></svg></button><button aria-label="向右"><svg><use href="#mindR"/></svg></button><button aria-label="向左"><svg><use href="#mindL"/></svg></button></div>
      <h3>樹狀圖</h3>
      <div class="tiles"><button aria-label="樹狀 1"><svg><use href="#treeR"/></svg></button><button aria-label="樹狀 2"><svg><use href="#treeL"/></svg></button><button aria-label="樹狀 3"><svg><use href="#treeB"/></svg></button><button aria-label="樹狀 4"><svg><use href="#treeUp"/></svg></button><button aria-label="樹狀 5"><svg><use href="#treeUpR"/></svg></button><button aria-label="樹狀 6"><svg><use href="#treeUpL"/></svg></button></div>
      <h3>時間軸</h3>
      <div class="tiles"><button aria-label="時間軸 1"><svg><use href="#timeR"/></svg></button><button aria-label="時間軸 2"><svg><use href="#timeL"/></svg></button><button class="current" aria-label="時間軸 3"><svg><use href="#timeD"/></svg></button><button aria-label="時間軸 4"><svg><use href="#timeU"/></svg></button><button aria-label="時間軸 5"><svg><use href="#timeS"/></svg></button></div>
      <h3>組織圖</h3>
      <div class="tiles"><button aria-label="組織 1"><svg><use href="#orgD"/></svg></button><button aria-label="組織 2"><svg><use href="#orgB"/></svg></button><button aria-label="組織 3"><svg><use href="#orgU"/></svg></button></div>
      <h3>魚骨圖</h3>
      <div class="tiles"><button aria-label="魚骨 1"><svg><use href="#fishL"/></svg></button><button aria-label="魚骨 2"><svg><use href="#fishR"/></svg></button></div>
      <h3>樹狀表格</h3>
      <div class="tiles"><button aria-label="表格 1"><svg><use href="#tabA"/></svg></button><button aria-label="表格 2"><svg><use href="#tabB"/></svg></button></div>
      <h3>矩陣圖</h3>
      <div class="tiles"><button aria-label="矩陣 1"><svg><use href="#matA"/></svg></button><button aria-label="矩陣 2"><svg><use href="#matB"/></svg></button></div>
      <h3>其它</h3>
      <div class="tiles"><button aria-label="圓環"><svg><use href="#othA"/></svg></button><button aria-label="氣泡"><svg><use href="#othB"/></svg></button><button aria-label="放射"><svg><use href="#othC"/></svg></button><button aria-label="括號 1"><svg><use href="#othD"/></svg></button><button aria-label="括號 2"><svg><use href="#othE"/></svg></button></div>
    </div>
    <span class="callout on-button"></span>
    <span class="callout on-timeline"></span>
  </section>

  <aside class="panel">
    <div class="panel-tabs">
      <button aria-label="頁面"><svg width="22" height="22" viewBox="0 0 22 22"><rect x="2" y="2" width="18" height="18" rx="3.500"/><rect x="7" y="8" width="8" height="6" rx="1"/></svg></button>
      <button class="current" aria-label="樣式"><svg width="24" height="26" viewBox="0 0 24 26"><path d="M12 4q2 7 8 9-6 2-8 9-2-7-8-9 6-2 8-9zM3 1v6M0 4h6M20 19v6M17 22h6"/></svg></button>
      <button aria-label="圖示"><svg width="22" height="22" viewBox="0 0 22 22"><path d="M11 21q-8-6-8-12a8 8 0 0 1 16 0q0 6-8 12z"/><path d="M7.500 10q3.500 5 7 0M8 6.500v1.500M14 6.500v1.500"/></svg></button>
      <button aria-label="剪貼畫"><svg width="22" height="22" viewBox="0 0 22 22"><path d="M11 2q2 0 3 3 4 0 5.500 1.500T18 12q2 5 0 7t-7-.5Q6 21 4 19t0-7Q1 8 2.500 6.500T8 5q1-3 3-3z"/><circle cx="11" cy="11.500" r="3"/></svg></button>
      <button aria-label="歷程"><svg width="22" height="22" viewBox="0 0 22 22"><path d="M11 2a9 9 0 0 0 0 18"/><path d="M13 2a9 9 0 0 1 0 18" stroke-dasharray="2 3"/><path d="M11 6v6l3 3"/></svg></button>
    </div>

    <section class="group">
      <h2 class="tall">字體<button aria-label="更多"><svg width="14" height="4"><use href="#dots"/></svg></button></h2>
      <div class="row">
        <span class="pick-box big"><select aria-label="字型" lang="zh-Hans"><option>微软雅黑</option></select><svg width="8" height="6"><use href="#tri"/></svg></span>
        <span class="pick-box size"><select aria-label="字級"><option>18</option></select><svg width="8" height="6"><use href="#tri"/></svg></span>
        <button class="font-step" aria-label="放大字型"><svg width="20" height="20"><use href="#fontA"/><path d="M12 5h6M15 2v6" stroke="#333" stroke-width="2"/></svg></button>
        <button class="font-step" aria-label="縮小字型"><svg width="20" height="20"><use href="#fontA"/><path d="M13 5h5" stroke="#333" stroke-width="2"/></svg></button>
      </div>
      <div class="formats">
        <button class="on" aria-label="粗體"><svg width="18" height="18" viewBox="0 0 18 18"><path d="M5 2h5a3.300 3.300 0 0 1 0 6.800H5zM5 8.800h6a3.500 3.500 0 0 1 0 7H5z"/></svg></button>
        <button aria-label="斜體"><svg width="18" height="18" viewBox="0 0 18 18"><path d="M7 2h6M5 16h6M10 2L8 16"/></svg></button>
        <button aria-label="底線"><svg width="18" height="18" viewBox="0 0 18 18"><path d="M5 1v7a4 4 0 0 0 8 0V1M4 16h10"/></svg></button>
        <button aria-label="刪除線"><svg width="18" height="18" viewBox="0 0 18 18"><path d="M13 5q0-3-4-3T5 5q0 2 2 3M2 9h14M13 12q0 4-4 4t-4-3"/></svg></button>
        <button aria-label="文字顏色"><svg width="16" height="20"><use href="#colorA"/></svg><svg width="8" height="6"><use href="#tri"/></svg></button>
        <button aria-label="醒目提示"><svg width="16" height="20"><use href="#marker"/></svg><svg width="8" height="6"><use href="#tri"/></svg></button>
      </div>
      <div class="formats">
        <button aria-label="靠左"><svg width="18" height="18" viewBox="0 0 18 18"><path d="M2 4.500h14M2 9h8M2 13.500h10"/></svg></button>
        <button class="on" aria-label="置中"><svg width="18" height="18" viewBox="0 0 18 18"><path d="M2 5.500h14M5 10h8M4 14.500h10"/></svg></button>
        <button aria-label="靠右"><svg width="18" height="18" viewBox="0 0 18 18"><path d="M2 4.500h14M8 9h8M6 13.500h10"/></svg></button>
        <button aria-label="左右對齊"><svg width="18" height="18" viewBox="0 0 18 18"><path d="M2 4.500h14M2 9h14M2 13.500h14"/></svg></button>
        <button aria-label="上標"><svg width="18" height="18" viewBox="0 0 18 18"><path d="M1 4l9 11M10 4L1 15"/><path class="hot" d="M12 2q3-1 3 1l-3 3h4"/></svg></button>
        <button aria-label="下標"><svg width="18" height="18" viewBox="0 0 18 18"><path d="M1 3l9 11M10 3L1 14"/><path class="hot" d="M13 12q3-1 3 1l-3 3h4"/></svg></button>
      </div>
    </section>

    <section class="group">
      <h2 class="short">佈局</h2>
      <div class="row">結構<button class="drop large push" aria-label="結構"><svg width="30" height="40" viewBox="13 8 30 40"><use href="#timeD"/></svg><svg width="10" height="8"><use href="#chev"/></svg></button></div>
      <div class="row sub">主題間距</div>
      <div class="row">
        <label for="gapx">水平</label>
        <span class="number"><input id="gapx" type="number" value="39"><svg width="15" height="20" viewBox="0 0 15 20"><path d="M.5 2v16" stroke="#e5e5e5"/><path d="M6 7l3-3.500L12 7zM6 14l3 3.500 3-3.500z" fill="#333"/></svg></span>
        <label class="push" for="gapy">垂直</label>
        <span class="number"><input id="gapy" type="number" value="39"><svg width="15" height="20" viewBox="0 0 15 20"><path d="M.5 2v16" stroke="#e5e5e5"/><path d="M6 7l3-3.500L12 7zM6 14l3 3.500 3-3.500z" fill="#333"/></svg></span>
      </div>
    </section>

    <section class="group">
      <h2>主題<button aria-label="更多"><svg width="14" height="4"><use href="#dots"/></svg></button></h2>
      <div class="rows">
        <div class="row"><span class="cap">形狀</span><button class="drop" aria-label="形狀"><svg width="20" height="18" viewBox="0 0 20 18"><rect x="2" y="3" width="16" height="12" rx="2" fill="none" stroke="#444" stroke-width="1.500"/></svg><svg width="10" height="8"><use href="#chev"/></svg></button><span class="push">圓角</span><button class="drop" aria-label="圓角"><svg width="20" height="18" viewBox="0 0 20 18"><path d="M3 3h6q7 0 7 7v5" fill="none" stroke="#666" stroke-width="1.200"/></svg><svg width="10" height="8"><use href="#chev"/></svg></button></div>
        <div class="row"><label class="tick"><input type="checkbox" checked>填充顏色</label><button class="drop push" aria-label="填充樣式"><svg width="24" height="14" viewBox="0 0 24 14"><rect x=".5" y=".5" width="23" height="13" fill="#fff" stroke="#eee"/><rect x="4" y="3" width="16" height="8" fill="#222"/></svg><svg width="10" height="8"><use href="#chev"/></svg></button><button class="drop large" aria-label="填充顏色"><span class="swatch"></span><svg width="10" height="8"><use href="#chev"/></svg></button></div>
        <div class="row"><label class="tick"><input type="checkbox" checked>邊框顏色</label><button class="drop large push" aria-label="邊框顏色"><span class="swatch"></span><svg width="10" height="8"><use href="#chev"/></svg></button></div>
        <div class="row">框線樣式<button class="drop push" aria-label="框線粗細"><svg width="24" height="4"><path d="M0 2h24" stroke="#333" stroke-width="3"/></svg><svg width="10" height="8"><use href="#chev"/></svg></button><button class="drop large" aria-label="框線"><svg width="54" height="2"><path d="M0 .5h54" stroke="#333"/></svg><svg width="10" height="8"><use href="#chev"/></svg></button></div>
      </div>
    </section>

    <section class="group">
      <h2>分支<button aria-label="更多"><svg width="14" height="4"><use href="#dots"/></svg></button></h2>
      <div class="rows">
        <div class="row">連接線樣式<button class="drop push" aria-label="連接線樣式"><svg width="24" height="20" viewBox="0 0 24 20"><path d="M3 8h6v4H3zM17 1h6v3h-6zM17 9h6v3h-6zM17 16h6v3h-6z" fill="#ccc"/><path d="M9 10h9M9 10q4-7 9-7M9 10q4 7 9 7" fill="none" stroke="#555"/></svg><svg width="10" height="8"><use href="#chev"/></svg></button></div>
        <div class="row"><span class="cap">線</span><button class="drop" aria-label="線條顏色"><span class="swatch violet"></span><svg width="10" height="8"><use href="#chev"/></svg></button><span class="push">寬度</span><button class="drop" aria-label="寬度"><svg width="24" height="4"><path d="M0 2h24" stroke="#333" stroke-width="3"/></svg><svg width="10" height="8"><use href="#chev"/></svg></button></div>
      </div>
    </section>

    <div class="actions">
      <button disabled>將變更套用至相同類型的主題</button>
      <button disabled>重設樣式</button>
    </div>
    <p class="activation" lang="zh-Hans"><strong>激活 Windows</strong>转到"设置"以激活 Windows。</p>
  </aside>
</main>

<footer class="status">
  <button class="st-icon" aria-label="定位"><svg width="18" height="16" viewBox="0 0 18 16"><path d="M1 1.500h16M1 6h7M1 10h6M1 14.500h7M13 15q-4-3-4-6a4 4 0 0 1 8 0q0 3-4 6z"/><circle cx="13" cy="9" r="1"/></svg></button>
  <button class="st-icon" aria-label="版面"><svg width="18" height="16" viewBox="0 0 18 16"><path d="M1.500 3v10M16.500 3v10M4.500 3.500h9v9h-9z"/></svg></button>
  <span class="st-rule"></span>
  <span class="page-select"><select aria-label="頁面"><option>頁面-1</option></select><svg width="8" height="6"><use href="#tri"/></svg></span>
  <span class="st-rule"></span>
  <button class="add-page" aria-label="新增頁面"><svg width="16" height="16" viewBox="0 0 16 16"><path d="M8 1v14M1 8h14"/></svg></button>
  <span class="st-rule"></span>
  <a class="page-tab" href="#">頁面-1</a>
  <span class="st-rule"></span>
  <div class="st-right">
    <span class="count">[中心主題 101]</span>
    <button aria-label="滑鼠"><svg width="16" height="16" viewBox="0 0 16 16"><rect x="2.500" y="1.500" width="11" height="13" rx="5.500"/><path d="M3 7h10"/><path d="M8 2h1q4 1 4 5H8z" fill="#555"/></svg></button>
    <button aria-label="地圖"><svg width="16" height="16" viewBox="0 0 16 16"><path d="M1 3l4-1 5 1 5-1v11l-5 1-5-1-4 1zM5.500 2v11M10.500 3v11"/></svg></button>
    <button aria-label="播放"><svg width="16" height="16" viewBox="0 0 16 16"><circle cx="8" cy="8" r="7"/><path d="M6.500 5.500v5l4-2.500z"/></svg></button>
    <button aria-label="符合"><svg width="16" height="16" viewBox="0 0 16 16"><path d="M1.500 1.500h13v13h-13zM5 5h6v6H5zM3 5V3h2M11 3h2v2M13 11v2h-2M5 13H3v-2"/></svg></button>
    <button aria-label="置中"><svg width="16" height="16" viewBox="0 0 16 16"><path d="M1.500 1.500h13v13h-13zM4 6V4h2M10 4h2v2M12 10v2h-2M6 12H4v-2"/></svg></button>
    <div class="zoom"><button aria-label="縮小"><svg width="10" height="10" viewBox="0 0 10 10"><path d="M0 5.500h9"/></svg></button>
    <input type="range" min="0" max="100" value="22" aria-label="縮放">
    <button aria-label="放大"><svg width="10" height="10" viewBox="0 0 10 10"><path d="M0 5h10M5 0v10"/></svg></button></div>
    <button class="percent">100%<svg width="8" height="6"><use href="#tri"/></svg></button>
    <button class="full" aria-label="全螢幕"><svg width="16" height="16" viewBox="0 0 16 16"><path d="M1.500 5V1.500H5M11 1.500h3.500V5M14.500 11v3.500H11M5 14.500H1.500V11"/></svg></button>
    <button class="fit" aria-label="頁寬"><svg width="16" height="16" viewBox="0 0 16 16"><path d="M1.500 1.500h13v13h-13zM4 8h8M4 6.500v3M12 6.500v3"/></svg></button>
  </div>
</footer>
</body>
</html>
```
FILE: styles.css
```css
* { box-sizing: border-box; }

body {
  margin: 0;
  min-height: 100vh;
  display: flex;
  flex-direction: column;
  background: #f5f5f5;
  color: #222;
  font: 12px/16px "Open Sans", "Noto Sans CJK TC", sans-serif;
}

[lang="zh-Hans"] { font-family: "Open Sans", "Noto Sans CJK SC", sans-serif; }

.defs { position: absolute; width: 0; height: 0; }

button {
  margin: 0;
  padding: 0;
  border: 0;
  background: none;
  color: inherit;
  font: inherit;
  display: flex;
  align-items: center;
  justify-content: center;
}

svg { display: block; flex: none; }
h2, h3, p { margin: 0; }
a { color: inherit; text-decoration: none; }

/* title bar */
.titlebar { display: flex; height: 36px; background: #dcdee0; color: #111; }
.brand { width: 250px; padding-left: 16px; display: flex; align-items: center; }
.brand-name { width: 156px; margin-left: 4px; white-space: nowrap; }
.pro { width: 30px; height: 16px; border-radius: 3px; background: linear-gradient(90deg, #ffce63, #ffb72b); color: #4d2c00; text-align: center; }
.doc-tabs { display: flex; padding-top: 3px; }
.doc-tab { width: 164px; padding: 0 11px 3px 8px; gap: 5px; border-radius: 6px 6px 0 0; }
.doc-tab span { flex: 1; text-align: left; white-space: nowrap; }
.doc-tab i { width: 8px; height: 8px; border-radius: 50%; background: #666; }
.doc-tab.current { background: #f5f5f5; }
.new-tab { width: 36px; padding-bottom: 3px; }
.last { position: relative; }
.last::after { content: ""; position: absolute; right: 0; top: 7px; width: 1px; height: 16px; background: #bbb; }
.window-tools { margin-left: auto; padding-right: 18px; display: flex; align-items: center; gap: 20px; }
.account { height: 24px; margin-right: 4px; border-radius: 12px; background: #d0d2d4; box-shadow: inset 0 0 0 1px #bfc1c3; }
.avatar-letter { font: 7px "Open Sans", sans-serif; fill: #fff; text-anchor: middle; }

/* menu bar */
.menubar { display: flex; align-items: center; height: 28px; border-bottom: 1px solid #dcdcdc; }
.menubar svg { fill: none; stroke: #333; stroke-width: 1.200; }
.menubar use { stroke: none; }
.quick { flex: 0 0 38%; padding-left: 11px; display: flex; align-items: center; gap: 12px; }
.quick button:first-child { margin-right: -4px; }
.with-text { gap: 8px; }
.with-tri { gap: 1px; }
.faded { opacity: .6; }
.bar-rule { width: 1px; height: 16px; background: #d5d5d5; }
.menu { display: flex; height: 27px; gap: 24px; margin-left: -1px; }
.menu a { padding: 6px 8px 0; white-space: nowrap; color: #111; }
.menu .current { color: #00b27a; border-bottom: 3px solid #00b27a; }
.share-tools { margin-left: auto; padding-right: 13px; display: flex; align-items: center; gap: 15px; font-size: 11px; }
.share-tools button:not(.with-tri) { gap: 7px; }
.share-tools button:first-child { gap: 5px; }

/* ribbon */
.ribbon { display: flex; height: 92px; border-bottom: 1px solid #dcdcdc; font-size: 11px; }
.ribbon-side { flex: 1; padding: 12px; display: flex; align-items: flex-start; }
.ribbon-side.end { justify-content: flex-end; padding-top: 20px; }
.ribbon button { flex-direction: column; justify-content: flex-start; }
.ribbon svg { fill: none; stroke: #444; stroke-width: 1.400; }
.ribbon use { stroke: none; }
.views { display: flex; padding: 6px; border-radius: 6px; background: #fff; }
.views button { width: 70px; height: 56px; padding-top: 8px; gap: 7px; border-radius: 4px; }
.views .current { background: #f0f0f0; }
.ai-tools { display: flex; padding-top: 20px; }
.ai-tools button { min-width: 61px; height: 56px; padding: 2px 9px 0; gap: 6px; white-space: nowrap; }
.tool-rule { width: 1px; height: 52px; margin: 0 4px; background: #dcdcdc; }
.ai-mark { font: italic 9px "Open Sans", sans-serif; fill: #333; stroke: none; }
.ribbon .export { gap: 4px; margin-right: 16px; }
.export svg { stroke: none; }

/* work area */
.work { flex: 1; display: flex; }
.canvas { flex: 1; position: relative; overflow: hidden; background: #fff; border-left: 2px solid #dcdcdc; }

.topic { position: absolute; left: 722px; font-size: 19px; line-height: 28px; font-weight: 700; color: #000; }
.root { left: 663px; top: 151px; width: 153px; height: 76px; padding: 2px; border: 3px solid #6684ff; border-radius: 3px; font-size: 24px; }
.root span { display: flex; height: 100%; padding-top: 2px; align-items: center; justify-content: center; border-radius: 11px; background: #000; color: #fff; }
.t1 { top: 269px; } .t2 { top: 350px; } .t3 { top: 431px; }
.link { position: absolute; left: 738px; width: 3px; height: 42px; border-radius: 2px; }
.l1 { top: 222px; height: 39px; background: #855cf8; }
.l2 { top: 300px; background: #5368ff; }
.l3 { top: 381px; background: #06a951; }
.fold { position: absolute; left: 731px; top: 222px; }

.notes { position: absolute; right: 44px; top: 11px; width: 88px; height: 39px; gap: 7px; border: 1px solid #eee; border-radius: 4px; background: #fff; color: #111; }
.collapse { position: absolute; right: 0; top: 0; width: 24px; height: 51px; border: 1px solid #dcdcdc; border-top: 0; border-right: 0; border-radius: 8px 0 0 0; background: #f5f5f5; }
.scroll-v { position: absolute; right: 0; top: 250px; width: 9px; height: 382px; border-radius: 4px; background: #d0d0d2; }
.scroll-h { position: absolute; left: 404px; bottom: 0; width: 804px; height: 9px; border-radius: 4px; background: #d0d0d2; }
.assistant { position: absolute; left: 54px; bottom: 30px; width: 36px; height: 36px; border-radius: 50%; background: #fff; box-shadow: 0 2px 8px rgba(0, 0, 0, .3); }

/* style switcher */
.switcher { position: absolute; left: 50%; bottom: 37px; transform: translateX(-50%); padding: 18px 16px 21px; border-radius: 6px; background: #fff; box-shadow: 0 1px 8px rgba(0, 0, 0, .3); }
.switcher h2 { font-size: 12px; line-height: 18px; font-weight: 400; color: #111; margin-bottom: 15px; }
.switch-row { display: flex; gap: 8px; }
.pick { width: 56px; height: 48px; border-radius: 5px; background: #fff; box-shadow: 0 1px 4px rgba(0, 0, 0, .35); }
.pick svg { width: 100%; height: 100%; }
.style { width: 90px; }
.dark { background: #000; }
.pick-rule { width: 1px; margin: 0 8px; background: #dcdcdc; }
.mini-dark { font: 4px "Open Sans", sans-serif; fill: #222; }
.mini-light { font: 4px "Open Sans", sans-serif; fill: #bbb; }

/* floating toolbar */
.floatbar { position: absolute; left: 669px; top: 63px; width: 635px; height: 62px; display: flex; border: 1px solid #ccc; border-radius: 5px; background: #fff; box-shadow: 0 1px 3px rgba(0, 0, 0, .15); font-size: 11px; }
.grip { background: #f3f3f3; border-radius: 4px 0 0 4px; }
.font-tools { width: 243px; padding: 4px 0 4px 9px; display: flex; flex-direction: column; gap: 4px; }
.font-line { display: flex; align-items: center; height: 24px; gap: 3px; }
.second { gap: 9px; padding-left: 7px; }
.second button { gap: 4px; height: 20px; }
.second .tight { gap: 1px; }
.bold-b { font-size: 18px; width: 12px; }
.line-rule { width: 1px; height: 24px; background: #dcdcdc; }
.grow { margin-left: 4px; }
.shrink { margin-left: 3px; }
.col-rule { width: 1px; margin: 4px 6px; background: #dcdcdc; }
.col { width: 36px; margin: 4px 0; padding-top: 6px; gap: 5px; flex-direction: column; justify-content: flex-start; line-height: 14px; border-radius: 4px; }
.low { gap: 8px; }
.col.current { background: #e6e6e6; }
.gap { margin-left: 7px; }
.pin { position: absolute; right: 5px; top: 5px; }

/* drop-down boxes */
.pick-box { position: relative; height: 24px; border: 1px solid #e3e3e3; border-radius: 5px; background: #fff; }
.pick-box select, .page-select select { width: 100%; height: 100%; padding: 0 8px; border: 0; background: none; appearance: none; font-family: inherit; font-size: 12px; color: #222; }
.pick-box svg, .page-select svg { position: absolute; right: 4px; top: calc(50% - 3px); pointer-events: none; }
.wide { width: 129px; }
.narrow { width: 49px; }
.big { width: 145px; height: 28px; }
.size { width: 49px; height: 28px; margin-left: 4px; }

/* layout gallery */
.layouts { position: absolute; left: 1071px; top: 106px; width: 406px; padding: 15px 14px 23px; border-radius: 4px; background: #fff; box-shadow: 0 0 5px rgba(0, 0, 0, .4); }
.layouts h3 { height: 22px; padding-left: 5px; font-size: 12px; line-height: 24px; font-weight: 400; color: #333; }
.tiles { display: flex; gap: 8px; }
.tiles button { width: 56px; height: 56px; border-radius: 5px; box-shadow: inset 0 0 0 1px #f1f1f1; }
.tiles svg { width: 56px; height: 56px; }
.tiles .current { background: #f1f1f1; }
.callout { position: absolute; border: 2px solid #ee1c25; pointer-events: none; }
.on-button { left: 1065px; top: 60px; width: 46px; height: 56px; }
.on-timeline { left: 1077px; top: 275px; width: 341px; height: 86px; }

/* side panel */
.panel { width: 298px; border: solid #dcdcdc; border-width: 0 1px; color: #333; }
.panel-tabs { display: flex; height: 41px; border-bottom: 1px solid #dcdcdc; }
.panel-tabs button { flex: 1; }
.panel-tabs svg { fill: none; stroke: #111; stroke-width: 1.800; }
.panel-tabs .current { background: #daf0ea; box-shadow: inset 0 -3px #00b27a; }
.panel-tabs .current svg { stroke: #00b27a; }
.group { margin: 0 13px 0 14px; padding-bottom: 10px; border-bottom: 1px solid #dcdcdc; }
.group h2 { height: 41px; padding: 0 8px 2px 0; display: flex; align-items: center; justify-content: space-between; font-size: 13px; font-weight: 700; color: #111; }
.group .tall { height: 48px; }
.group .short { height: 29px; }
.row { display: flex; align-items: center; }
.sub { height: 40px; }
.rows { display: grid; gap: 6px; }
.push { margin-left: auto; }
.font-step { width: 35px; height: 28px; }
.formats { display: flex; justify-content: space-between; margin: 11px 7px 0 5px; }
.formats button { width: 30px; height: 26px; gap: 2px; border-radius: 5px; }
.formats svg { fill: none; stroke: #222; stroke-width: 1.600; }
.formats use { stroke: none; }
.formats .on { background: #c5e9de; }
.formats .on svg, .formats .hot { stroke: #00b27a; }
.number { position: relative; width: 56px; height: 24px; margin-left: 6px; border: 1px solid #e3e3e3; border-radius: 5px; background: #fff; }
.number input { width: 38px; height: 22px; padding: 0 0 0 7px; border: 0; background: none; font: inherit; color: #222; appearance: textfield; }
.number input::-webkit-inner-spin-button { appearance: none; }
.number svg { position: absolute; right: 2px; top: 1px; }
.cap { width: 32px; }
.drop { width: 56px; height: 28px; gap: 6px; border: 1px solid #e3e3e3; border-radius: 5px; background: #fff; padding: 0 8px 0 3px; justify-content: flex-end; }
.push + .drop { margin-left: 8px; }
.large { width: 88px; }
h2.short + .row .drop { height: 46px; gap: 20px; }
.swatch { width: 60px; height: 20px; border-radius: 4px; background: #000; }
.violet { width: 28px; background: #855cf8; }
.tick { display: flex; align-items: center; gap: 6px; }
.tick input { position: relative; width: 14px; height: 14px; margin: 0; appearance: none; border-radius: 2px; background: #00b27a; }
.tick input::after { content: ""; position: absolute; left: 5px; top: 2px; width: 4px; height: 8px; border: solid #fff; border-width: 0 2px 2px 0; transform: rotate(45deg); }
.actions { display: grid; gap: 12px; padding: 10px 32px 0; }
.actions button { height: 31px; border: 1px solid #d5d5d5; border-bottom-width: 2px; border-radius: 4px; background: #fff; color: #aaa; }
.activation { padding: 56px 0 12px 7px; font-size: 15px; line-height: 22px; color: #b4b4b4; white-space: nowrap; }
.activation strong { display: block; font-size: 20px; line-height: 26px; font-weight: 400; }

/* status bar */
.status { display: flex; align-items: center; height: 30px; border-top: 1px solid #dcdcdc; padding-left: 10px; }
.status svg { fill: none; stroke: #333; stroke-width: 1.200; }
.status use { stroke: none; }
.st-icon + .st-icon { margin: 0 12px 0 14px; }
.st-rule { width: 1px; height: 22px; background: #ccc; }
.page-select { position: relative; width: 99px; height: 26px; margin: 0 4px 0 3px; border: 1px solid #eee; border-radius: 4px; background: #f2f2f4; }
.page-select select { padding-left: 6px; color: #000; }
.add-page { width: 54px; }
.page-tab { width: 73px; height: 28px; margin: 0 1px 0 3px; line-height: 28px; text-align: center; color: #00b27a; border-bottom: 2px solid #1fa578; }
.st-right { margin-left: auto; padding-right: 16px; display: flex; align-items: center; gap: 12px; }
.count { margin-right: 5px; }
.zoom { display: flex; align-items: center; gap: 4px; }
.zoom input { width: 100px; height: 14px; margin: 0; appearance: none; background: linear-gradient(90deg, #000 26%, #ddd 26%) center / 100% 2px no-repeat; }
.zoom input::-webkit-slider-thumb { appearance: none; width: 12px; height: 12px; border: 2px solid #000; border-radius: 50%; background: #fff; }
.percent { gap: 4px; }
.full { margin-left: 49px; }
.fit { margin-left: 6px; }
```
